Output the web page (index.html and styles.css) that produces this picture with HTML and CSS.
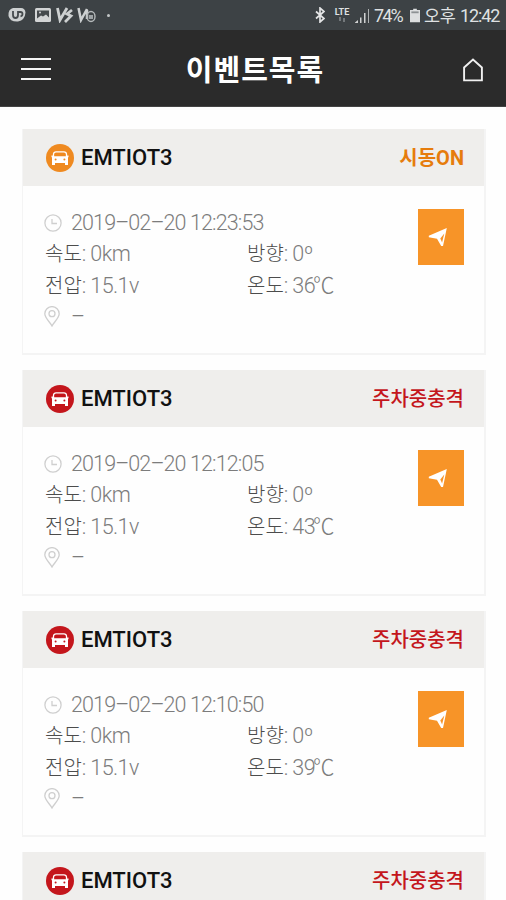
FILE: index.html
```html
<!DOCTYPE html>
<html lang="ko">
<head>
<meta charset="utf-8">
<title>이벤트목록</title>
<link rel="stylesheet" href="styles.css">
</head>
<body>
<svg class="defs" aria-hidden="true">
  <symbol id="car" viewBox="0 0 28 28">
    <circle cx="14" cy="14" r="14" fill="currentColor"/>
    <path d="M7.500 13V10Q7.800 7.900 10 7.900h8q2.200 0 2.500 2.100v3" fill="none" stroke="#fff" stroke-width="1.300"/>
    <path d="M5.500 11.500h1.500l1 .8h12l1-.8h1.500v1.500l-.5.500v7.500h-3v-2H9v2H6v-7.500l-.5-.5z" fill="#fff"/>
    <circle cx="9.600" cy="15.500" r="1" fill="currentColor"/><circle cx="18.400" cy="15.500" r="1" fill="currentColor"/>
  </symbol>
  <symbol id="clock" viewBox="0 0 18 18">
    <circle cx="9" cy="9" r="8.100" fill="none" stroke="currentColor" stroke-width="1.300"/>
    <path d="M8 5v4.500H13" fill="none" stroke="currentColor" stroke-width="1.300"/>
  </symbol>
  <symbol id="pin" viewBox="0 0 16 21">
    <path d="M8 20C6 16 .8 12 .8 7.800a7.200 7.200 0 0 1 14.400 0C15.200 12 10 16 8 20z" fill="none" stroke="currentColor" stroke-width="1.300"/>
    <circle cx="8" cy="7.700" r="3" fill="none" stroke="currentColor" stroke-width="1.300"/>
  </symbol>
  <symbol id="send" viewBox="0 0 20 20">
    <path d="M18.800 1 .8 8.800v1.400l8.200 1.500L13.200 19h1.800z" fill="#fff"/>
    <path d="M16.300 6.500 12.300 11.500l1.800 4z" fill="#f79428"/>
  </symbol>
</svg>

<div class="status">
  <div class="status-left">
    <svg class="app" viewBox="0 0 20 16"><path d="M6 1h8q4 0 4.500 4.500Q18 13 11 14.500 3 15 1.500 9 1 2 6 1z" fill="#cdd0d1"/><path d="M6 4v4q0 3 2.500 3T11 8V4M11 5h2.500q2 0 2 2t-2 2.300" fill="none" stroke="#454a4d" stroke-width="1.800"/></svg>
    <svg class="photo" viewBox="0 0 16 14"><rect width="16" height="14" rx="1.500" fill="#d2d4d5"/><path d="M2 2.500h12v7l-3-3-3 2-2-1-4 3z" fill="#454a4d"/><circle cx="5" cy="4.500" r="1" fill="#d2d4d5"/></svg>
    <svg class="vs" viewBox="0 0 18 16"><path d="M1.500 1 4 13 11 1M16 3l-5 4 4 2-6 6" fill="none" stroke="#cdd0d1" stroke-width="2.800"/></svg>
    <svg class="vo" viewBox="0 0 19 16"><path d="M1.500 1 4 13 10 2M10 3v9" fill="none" stroke="#cdd0d1" stroke-width="2.500"/><ellipse cx="14" cy="9.500" rx="4" ry="5" fill="none" stroke="#b5b9ba" stroke-width="1.400"/><path d="M12 8v4h4V8z" fill="#9da2a4"/></svg>
    <i class="dot"></i>
  </div>
  <div class="status-right">
    <svg class="bt" viewBox="0 0 10 16"><path d="M1 4.500 9 11.500 5 15V1l4 3.500-8 7" fill="none" stroke="#e3e4e5" stroke-width="1.700"/></svg>
    <span class="lte"><b>LTE</b><svg viewBox="0 0 8 5"><path d="M2 0v4M6 1v4" stroke="#858a8d" stroke-width="1.500"/></svg></span>
    <svg class="signal" viewBox="0 0 15 15"><path d="M0 14.500 3 12v3H0zM5 9.500h1.500V15H5zM9 5h1.500v10H9z" fill="#cfd1d2"/><path d="M13 1h1v14h-1z" fill="#aeb2b3"/></svg>
    <span class="pct">74%</span>
    <svg class="battery" viewBox="0 0 11 15"><path d="M3.500 0h4v1.500H11V15H0V1.500h3.500z" fill="#dcdedf"/><path d="M1.500 3h8v2h-8z" fill="#8c9193"/></svg>
    <span class="ampm">오후</span><span class="time">12:42</span>
  </div>
</div>

<header class="bar">
  <div class="menu"><i></i><i></i><i></i></div>
  <h1>이벤트목록</h1>
  <svg class="home" viewBox="0 0 20 24"><path d="M1.100 9.500 10 1.500l8.900 8v12.900H1.100z" fill="none" stroke="#f0f0f0" stroke-width="1.900"/></svg>
</header>

<main class="list">
  <article class="card on">
    <div class="head"><svg class="car"><use href="#car"/></svg><h2>EMTIOT3</h2><strong>시동ON</strong></div>
    <div class="body">
      <div class="info">
        <div class="row"><svg class="clock"><use href="#clock"/></svg><span class="date">2019–02–20 12:23:53</span></div>
        <div class="row pair"><span><b>속도</b>: 0km</span><span><b>방향</b>: 0º</span></div>
        <div class="row pair"><span><b>전압</b>: 15.1v</span><span><b>온도</b>: 36<em>℃</em></span></div>
        <div class="row"><svg class="pin"><use href="#pin"/></svg><span>–</span></div>
      </div>
      <div class="go"><svg><use href="#send"/></svg></div>
    </div>
  </article>
  <article class="card">
    <div class="head"><svg class="car"><use href="#car"/></svg><h2>EMTIOT3</h2><strong>주차중충격</strong></div>
    <div class="body">
      <div class="info">
        <div class="row"><svg class="clock"><use href="#clock"/></svg><span class="date">2019–02–20 12:12:05</span></div>
        <div class="row pair"><span><b>속도</b>: 0km</span><span><b>방향</b>: 0º</span></div>
        <div class="row pair"><span><b>전압</b>: 15.1v</span><span><b>온도</b>: 43<em>℃</em></span></div>
        <div class="row"><svg class="pin"><use href="#pin"/></svg><span>–</span></div>
      </div>
      <div class="go"><svg><use href="#send"/></svg></div>
    </div>
  </article>
  <article class="card">
    <div class="head"><svg class="car"><use href="#car"/></svg><h2>EMTIOT3</h2><strong>주차중충격</strong></div>
    <div class="body">
      <div class="info">
        <div class="row"><svg class="clock"><use href="#clock"/></svg><span class="date">2019–02–20 12:10:50</span></div>
        <div class="row pair"><span><b>속도</b>: 0km</span><span><b>방향</b>: 0º</span></div>
        <div class="row pair"><span><b>전압</b>: 15.1v</span><span><b>온도</b>: 39<em>℃</em></span></div>
        <div class="row"><svg class="pin"><use href="#pin"/></svg><span>–</span></div>
      </div>
      <div class="go"><svg><use href="#send"/></svg></div>
    </div>
  </article>
  <article class="card last">
    <div class="head"><svg class="car"><use href="#car"/></svg><h2>EMTIOT3</h2><strong>주차중충격</strong></div>
  </article>
</main>
</body>
</html>
```
FILE: styles.css
```css
* { box-sizing: border-box; }
body {
  margin: 0;
  height: 900px;
  overflow: hidden;
  background: #fefefe;
  font-family: Roboto, "Noto Sans CJK KR", sans-serif;
}
svg { display: block; flex: none; }
.defs { width: 0; height: 0; position: absolute; }
h1, h2 { margin: 0; }

.status {
  height: 30px;
  padding: 0 6px 0 7px;
  display: flex;
  justify-content: space-between;
  align-items: center;
  background: #3d4245;
  color: #dfe1e2;
}
.status-left, .status-right { display: flex; align-items: center; }
.app { width: 20px; height: 16px; margin-right: 8px; }
.photo { width: 16px; height: 14px; margin-right: 5px; }
.vs { width: 18px; height: 16px; margin-right: 3px; }
.vo { width: 19px; height: 16px; margin-right: 11px; }
.dot { width: 3px; height: 3px; border-radius: 50%; background: #c3c6c7; }
.bt { width: 10px; height: 16px; margin-right: 9px; }
.lte { width: 16px; margin-right: 5px; display: flex; flex-direction: column; align-items: center; font-size: 9px; line-height: 9px; }
.lte svg { width: 8px; height: 5px; }
.signal { width: 15px; height: 15px; margin-right: 4px; }
.pct, .time { font-size: 18px; line-height: 30px; padding-top: 2px; }
.pct { width: 29px; margin-right: 7px; letter-spacing: -1.9px; white-space: nowrap; }
.battery { width: 10px; height: 15px; margin-right: 4px; }
.ampm { font-size: 17.5px; line-height: 30px; width: 36px; padding-top: 1px; letter-spacing: -.3px; }
.time { width: 40px; letter-spacing: -1.1px; }

.bar {
  height: 77px;
  padding: 0 23px 0 21px;
  display: grid;
  grid-template-columns: 30px 1fr 20px;
  align-items: center;
  background: #2b2b2b;
  border-bottom: 1px solid #444;
  color: #fff;
}
.menu { display: grid; gap: 8px; padding-top: 2px; }
.menu i { height: 2px; background: #f5f5f5; }
.bar h1 { padding: 5px 4px 0 0; text-align: center; font-size: 29px; font-weight: 700; line-height: 40px; letter-spacing: 1px; }
.home { width: 20px; height: 24px; margin-top: 3px; }

.list { padding: 22px 20px 0 22px; display: grid; gap: 15px; }
.card { height: 226px; border: solid #f4f4f4; border-width: 0 2px 2px 1px; color: #c4161c; }
.card.on { color: #ef8a20; }
.card.last { height: 49px; overflow: hidden; border-bottom: 0; }
.head {
  height: 57px;
  padding: 1px 20px 0 23px;
  display: flex;
  align-items: center;
  background: #efeeec;
}
.car { width: 28px; height: 28px; margin-right: 7px; }
.head h2 { flex: 1; color: #111; font-size: 22px; font-weight: 500; line-height: 28px; }
.head strong { font-size: 20px; font-weight: 500; line-height: 28px; }
.on .head strong { color: #e67c0c; font-weight: 700; }
.body { display: flex; justify-content: space-between; padding: 23px 20px 0 22px; }
.info { width: 330px; margin-top: -2px; color: #7c7c7c; font-size: 21.5px; font-weight: 300; letter-spacing: -.6px; }
.date { letter-spacing: -.88px; }
.row { height: 31.3px; display: flex; align-items: center; line-height: 31px; white-space: nowrap; }
.row b { color: #4c4c4c; font-size: 20px; font-weight: 300; letter-spacing: 0; }
.row em { font-style: normal; margin-left: -2px; letter-spacing: -1px; }
.pair { display: grid; grid-template-columns: 202px 1fr; }
.clock { width: 18px; height: 18px; margin: 1px 9px 0 -1px; color: #cfcfcf; }
.pin { width: 16px; height: 21px; margin: 0 11px 0 -1px; color: #cfcfcf; }
.go { width: 46px; height: 56px; background: #f79428; padding: 18px 0 0 10px; }
.go svg { width: 20px; height: 20px; }
```
